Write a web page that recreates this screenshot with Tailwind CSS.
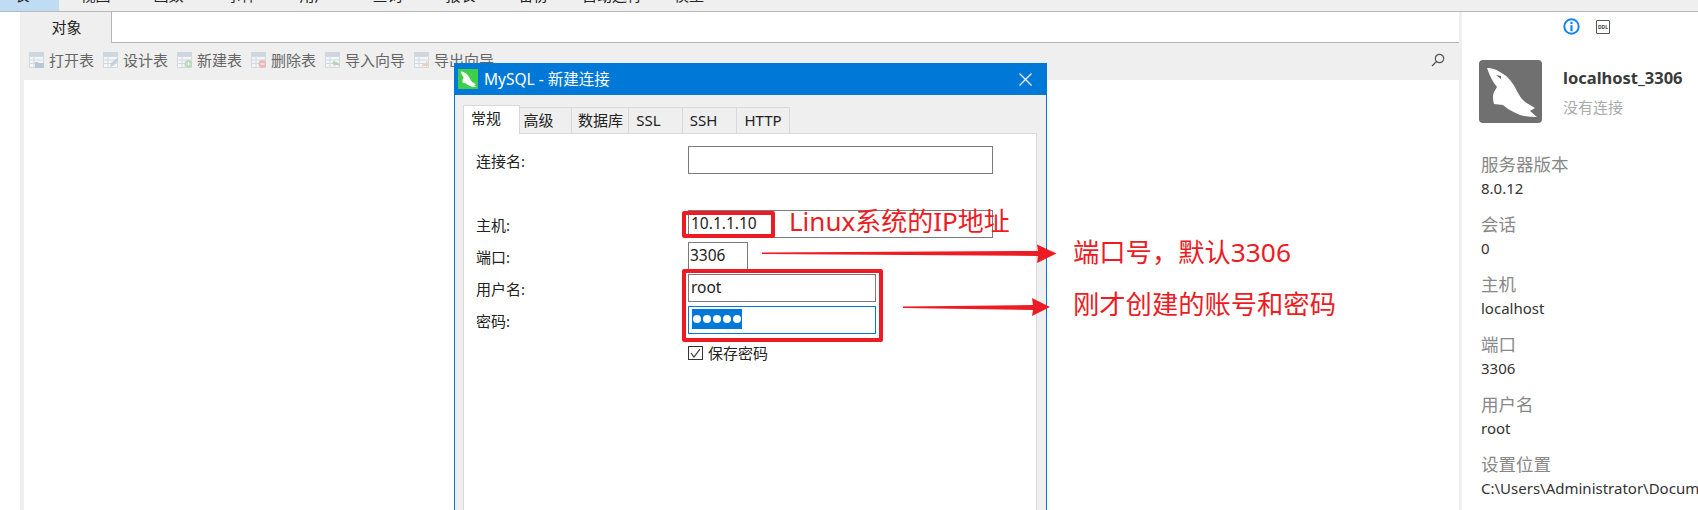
<!DOCTYPE html>
<html lang="zh-CN">
<head>
  <meta charset="UTF-8">
  <title>MySQL - 新建连接</title>
  <script src="https://cdn.jsdelivr.net/npm/@tailwindcss/browser@4"></script>
</head>
<body class="relative w-[1698px] h-[510px] overflow-hidden bg-white text-[15px] text-[#222] font-['Noto_Sans','Noto_Sans_CJK_SC',sans-serif]">

  <!-- 菜单栏，只露出文字底部 -->
  <div class="h-[12px] overflow-hidden bg-[#efefef] border-b border-[#b9b9b9]">
    <div class="flex -ml-[15px] -mt-[13px] h-[24px] leading-[16px] text-center">
      <div class="w-[74px] bg-[#c0dcf3]">表</div>
      <div class="w-[73px]">视图</div>
      <div class="w-[73px]">函数</div>
      <div class="w-[73px]">事件</div>
      <div class="w-[73px]">用户</div>
      <div class="w-[73px]">查询</div>
      <div class="w-[73px]">报表</div>
      <div class="w-[73px]">备份</div>
      <div class="w-[84px]">自动运行</div>
      <div class="w-[70px]">模型</div>
    </div>
  </div>

  <div class="flex h-[498px]">
    <div class="w-[20px] bg-white"></div>

    <!-- 主区域 -->
    <div class="w-[1439px] flex flex-col bg-[#efefef]">
      <div class="flex h-[31px]">
        <div class="w-[91px] h-[31px] flex items-center justify-center pl-[2px] pb-[1px] leading-[20px]">对象</div>
        <div class="flex-1 bg-white border-l border-b border-[#b5b5b5]"></div>
      </div>
      <div class="h-[37px] flex items-center gap-[9px] pl-[9px] pr-[14px] pb-[3px] text-[#666]">
        <div class="flex items-center gap-[5px]">
          <svg class="opacity-75" width="15" height="16" viewBox="0 0 15 16"><path d="M0 0h15v4H0z" fill="#c3ced9"/><path d="M.5 4.5h14v11H.5zM5 4.5v11M.5 8h14M.5 11.5h14" fill="#f6f8fa" stroke="#c9d3dd"/><path d="M6 10h3l1 1h5v5H6z" fill="#a9b9c7"/></svg>
          <span class="leading-[20px]">打开表</span>
        </div>
        <div class="flex items-center gap-[5px]">
          <svg class="opacity-75" width="15" height="16" viewBox="0 0 15 16"><path d="M0 0h15v4H0z" fill="#c3ced9"/><path d="M.5 4.5h14v11H.5zM5 4.5v11M.5 8h14M.5 11.5h14" fill="#f6f8fa" stroke="#c9d3dd"/><path d="M7 15l1-4 6-5 2 2-6 6z" fill="#b9c6d1"/></svg>
          <span class="leading-[20px]">设计表</span>
        </div>
        <div class="flex items-center gap-[5px]">
          <svg class="opacity-75" width="15" height="16" viewBox="0 0 15 16"><path d="M0 0h15v4H0z" fill="#c3ced9"/><path d="M.5 4.5h14v11H.5zM5 4.5v11M.5 8h14M.5 11.5h14" fill="#f6f8fa" stroke="#c9d3dd"/><circle cx="11.5" cy="12" r="4" fill="#a9cf9f"/><path d="M9.5 12h4M11.5 10v4" stroke="#fff"/></svg>
          <span class="leading-[20px]">新建表</span>
        </div>
        <div class="flex items-center gap-[5px]">
          <svg class="opacity-75" width="15" height="16" viewBox="0 0 15 16"><path d="M0 0h15v4H0z" fill="#c3ced9"/><path d="M.5 4.5h14v11H.5zM5 4.5v11M.5 8h14M.5 11.5h14" fill="#f6f8fa" stroke="#c9d3dd"/><circle cx="11.5" cy="12" r="4" fill="#e6aaa6"/><path d="M9.5 12h4" stroke="#fff"/></svg>
          <span class="leading-[20px]">删除表</span>
        </div>
        <div class="flex items-center gap-[5px]">
          <svg class="opacity-75" width="15" height="16" viewBox="0 0 15 16"><path d="M0 0h15v4H0z" fill="#c3ced9"/><path d="M.5 4.5h14v11H.5zM5 4.5v11M.5 8h14M.5 11.5h14" fill="#f6f8fa" stroke="#c9d3dd"/><path d="M7 11l3-3v2c3 0 5 2 5 5-1-2-3-2-5-2v2z" fill="#a9c9a3"/></svg>
          <span class="leading-[20px]">导入向导</span>
        </div>
        <div class="flex items-center gap-[5px]">
          <svg class="opacity-75" width="15" height="16" viewBox="0 0 15 16"><path d="M0 0h15v4H0z" fill="#c3ced9"/><path d="M.5 4.5h14v11H.5zM5 4.5v11M.5 8h14M.5 11.5h14" fill="#f6f8fa" stroke="#c9d3dd"/><path d="M15 12l-3-3v2c-2 0-4 1-5 4 2-1 3-1 5-1v2z" fill="#e6cda6"/></svg>
          <span class="leading-[20px]">导出向导</span>
        </div>
        <svg class="ml-auto" width="14" height="14" viewBox="0 0 14 14" fill="none" stroke="#555" stroke-width="1.2"><circle cx="8.5" cy="5.5" r="4.2"/><path d="M5.5 8.5L1 13"/></svg>
      </div>
      <div class="flex-1 ml-[4px] bg-white"></div>
    </div>

    <div class="w-[3px] bg-[#efefef]"></div>

    <!-- 右侧信息面板 -->
    <div class="flex-1 bg-white overflow-hidden">
      <div class="flex items-start gap-[16px] pl-[101px] pt-[6px] h-[48px]">
        <svg width="17" height="17" viewBox="0 0 17 17"><circle cx="8.5" cy="8.5" r="7.2" fill="none" stroke="#1a82ee" stroke-width="2"/><path d="M7.4 3.8h2.2V6H7.4zM7.4 7.2h2.2v6H7.4z" fill="#1a82ee"/></svg>
        <div class="w-[14px] h-[14px] mt-[2px] border border-[#555] rounded-[1px] flex items-center justify-center text-[5px] leading-[6px] font-bold text-[#444]">DDL</div>
      </div>
      <div class="flex gap-[21px] pl-[17px] h-[92px]">
        <div class="w-[63px] h-[63px] bg-[#707070] rounded-[4px]">
          <svg width="63" height="63" viewBox="0 0 63 63"><path d="M8 8Q15 8 21 12Q27 15 31 20Q36 26 39 33Q42 39 46 42L56 48L51 51L58 57Q48 57 41 55Q34 52 29 49L24 45L15 44Q13 37 15 32L18 27Q12 20 8 8Z" fill="#fff"/><path d="M17 15l5 1 0 3z" fill="#666"/></svg>
        </div>
        <div class="pt-[6px]">
          <div class="h-[24px] leading-[24px] font-bold text-[#3a3a3a] text-[16.5px]">localhost_3306</div>
          <div class="mt-[5px] h-[24px] leading-[24px] text-[#aaa]">没有连接</div>
        </div>
      </div>
      <div class="pl-[19px] whitespace-nowrap flex flex-col gap-[12px] text-[#333]">
        <div><div class="h-[24px] leading-[24px] text-[17.5px] text-[#888]">服务器版本</div><div class="h-[24px] leading-[24px]">8.0.12</div></div>
        <div><div class="h-[24px] leading-[24px] text-[17.5px] text-[#888]">会话</div><div class="h-[24px] leading-[24px]">0</div></div>
        <div><div class="h-[24px] leading-[24px] text-[17.5px] text-[#888]">主机</div><div class="h-[24px] leading-[24px]">localhost</div></div>
        <div><div class="h-[24px] leading-[24px] text-[17.5px] text-[#888]">端口</div><div class="h-[24px] leading-[24px]">3306</div></div>
        <div><div class="h-[24px] leading-[24px] text-[17.5px] text-[#888]">用户名</div><div class="h-[24px] leading-[24px]">root</div></div>
        <div><div class="h-[24px] leading-[24px] text-[17.5px] text-[#888]">设置位置</div><div class="h-[24px] leading-[24px]">C:\Users\Administrator\Documents\Navicat</div></div>
      </div>
    </div>
  </div>

  <!-- 新建连接对话框 -->
  <div class="absolute left-[454px] top-[63px] w-[593px] h-[460px] bg-[#efefef] border-x border-[#0078d7]">
    <div class="h-[32px] -mx-[1px] bg-[#0078d7] flex items-center pl-[4px] pr-[15px] text-white">
      <div class="w-[20px] h-[20px] bg-[#3ecf4a]">
        <svg width="20" height="20" viewBox="0 0 63 63"><path d="M8 8Q15 8 21 12Q27 15 31 20Q36 26 39 33Q42 39 46 42L56 48L51 51L58 57Q48 57 41 55Q34 52 29 49L24 45L15 44Q13 37 15 32L18 27Q12 20 8 8Z" fill="#fff"/></svg>
      </div>
      <span class="ml-[6px] leading-[20px] text-[15.5px]">MySQL - 新建连接</span>
      <svg class="ml-auto" width="13" height="13" viewBox="0 0 13 13" stroke="#fff" stroke-width="1.2"><path d="M.5.5l12 12M12.5.5l-12 12"/></svg>
    </div>
    <div class="px-[8px] pt-[10px]">
      <div class="flex items-end h-[28px] text-center leading-[20px]">
        <div class="relative z-10 w-[57px] h-[29px] -mb-[1px] bg-white border-x border-t border-[#d9d9d9] pt-[2px] pr-[11px]">常规</div>
        <div class="w-[52px] h-[26px] border-r border-t border-[#d9d9d9] pt-[2px] pr-[14px]">高级</div>
        <div class="w-[57px] h-[26px] border-r border-t border-[#d9d9d9] pt-[2px] pl-[1px]">数据库</div>
        <div class="w-[54px] h-[26px] border-r border-t border-[#d9d9d9] pt-[2px] pr-[14px]">SSL</div>
        <div class="w-[54px] h-[26px] border-r border-t border-[#d9d9d9] pt-[2px] pr-[12px]">SSH</div>
        <div class="w-[53px] h-[26px] border-r border-t border-[#d9d9d9] pt-[2px]">HTTP</div>
      </div>
      <div class="w-[574px] h-[400px] bg-white border border-[#d9d9d9] pl-[12px] pt-[12px]">
        <div class="flex h-[28px] mb-[36px]">
          <div class="w-[212px] pt-[5px] leading-[20px]">连接名:</div>
          <div class="w-[305px] border border-[#7a7a7a]"></div>
        </div>
        <div class="flex h-[28px] mb-[4px]">
          <div class="w-[212px] pt-[5px] leading-[20px]">主机:</div>
          <div class="w-[305px] border border-[#7a7a7a] pl-[2px] leading-[24px] text-[15.5px]">10.1.1.10</div>
        </div>
        <div class="flex h-[28px] mb-[4px]">
          <div class="w-[212px] pt-[5px] leading-[20px]">端口:</div>
          <div class="w-[60px] border border-[#7a7a7a] pl-[1px] leading-[25px] text-[15.5px]">3306</div>
        </div>
        <div class="flex h-[28px] mb-[4px]">
          <div class="w-[212px] pt-[5px] leading-[20px]">用户名:</div>
          <div class="w-[188px] border border-[#7a7a7a] pl-[2px] leading-[25px] text-[15.5px]">root</div>
        </div>
        <div class="flex h-[28px] mb-[12px]">
          <div class="w-[212px] pt-[5px] leading-[20px]">密码:</div>
          <div class="w-[188px] border border-[#0078d7] pl-[3px] pt-[2px]">
            <div class="w-[50px] h-[20px] bg-[#0078d7] flex items-center justify-center gap-[2px]">
              <span class="w-[8px] h-[8px] rounded-full bg-white"></span>
              <span class="w-[8px] h-[8px] rounded-full bg-white"></span>
              <span class="w-[8px] h-[8px] rounded-full bg-white"></span>
              <span class="w-[8px] h-[8px] rounded-full bg-white"></span>
              <span class="w-[8px] h-[8px] rounded-full bg-white"></span>
            </div>
          </div>
        </div>
        <div class="flex items-center h-[14px] ml-[212px] gap-[5px]">
          <div class="w-[15px] h-[14px] border border-[#333] bg-white">
            <svg width="13" height="12" viewBox="0 0 13 12" fill="none" stroke="#333" stroke-width="1.2"><path d="M2 6l3 4 6-8"/></svg>
          </div>
          <span class="leading-[20px]">保存密码</span>
        </div>
      </div>
    </div>
  </div>

  <!-- 红色标注 -->
  <div class="absolute left-[682px] top-[211px] w-[93px] h-[27px] border-[4px] border-[#ed1c24] rounded-[2px]"></div>
  <div class="absolute left-[682px] top-[269px] w-[201px] h-[73px] border-[4px] border-[#ed1c24] rounded-[2px]"></div>
  <svg class="absolute left-0 top-0" width="1698" height="510" fill="#ed1c24">
    <path d="M762 252.5L1038 251L1037 244.5L1056.5 253.5L1037 263L1038 256L762 254Z"/>
    <path d="M903 306.5L1033 305L1032 298L1050 307L1032 316L1033 310L903 308Z"/>
  </svg>
  <div class="absolute left-[789px] top-[205px] leading-[32px] text-[26px] text-[#ed1c24] whitespace-nowrap">Linux系统的IP地址</div>
  <div class="absolute left-[1073px] top-[236px] leading-[32px] text-[26.3px] text-[#ed1c24] whitespace-nowrap">端口号，默认3306</div>
  <div class="absolute left-[1073px] top-[288px] leading-[32px] text-[26.3px] text-[#ed1c24] whitespace-nowrap">刚才创建的账号和密码</div>
</body>
</html>
